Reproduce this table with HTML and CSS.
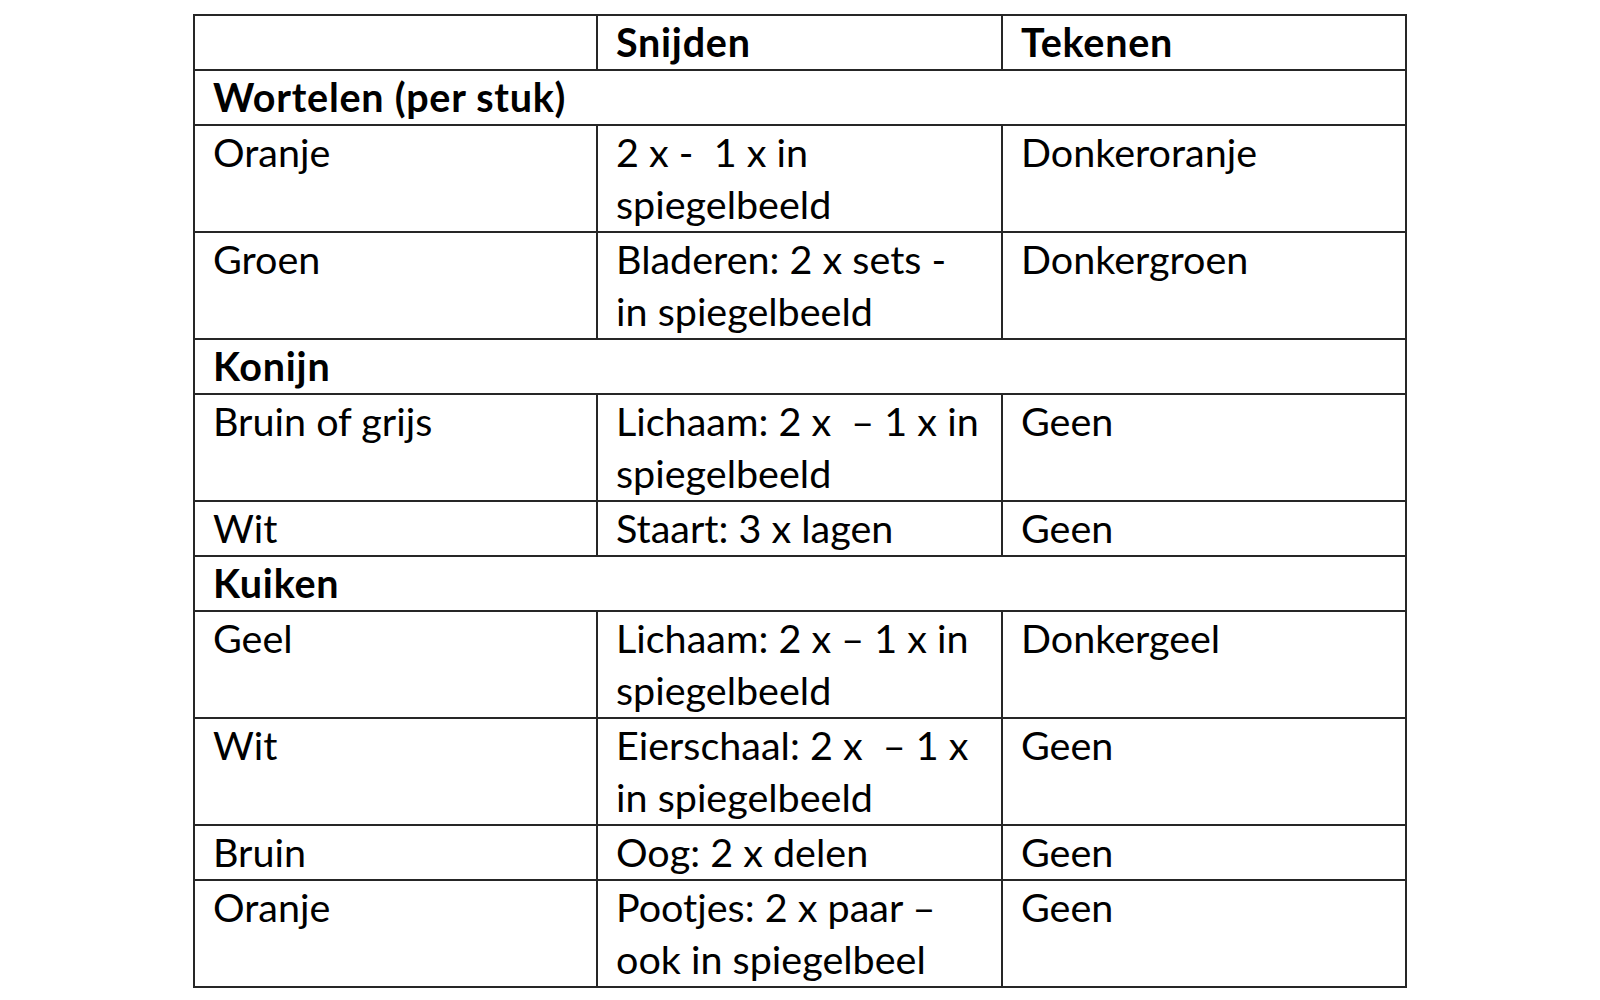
FILE: index.html
```html
<!DOCTYPE html>
<html lang="nl">
<head>
<meta charset="utf-8">
<title>Materialen</title>
<link rel="stylesheet" href="styles.css">
</head>
<body>
<table class="grid">
  <colgroup>
    <col class="c1"><col class="c2"><col class="c3">
  </colgroup>
  <tr class="head">
    <td></td>
    <td>Snijden</td>
    <td>Tekenen</td>
  </tr>
  <tr class="section"><td colspan="3">Wortelen (per stuk)</td></tr>
  <tr><td>Oranje</td><td>2 x -&nbsp; 1 x in<br>spiegelbeeld</td><td>Donkeroranje</td></tr>
  <tr><td>Groen</td><td>Bladeren: 2 x sets -<br>in spiegelbeeld</td><td>Donkergroen</td></tr>
  <tr class="section"><td colspan="3">Konijn</td></tr>
  <tr><td>Bruin of grijs</td><td>Lichaam: 2 x &nbsp;– 1 x in<br>spiegelbeeld</td><td>Geen</td></tr>
  <tr><td>Wit</td><td>Staart: 3 x lagen</td><td>Geen</td></tr>
  <tr class="section"><td colspan="3">Kuiken</td></tr>
  <tr><td>Geel</td><td>Lichaam: 2 x – 1 x in<br>spiegelbeeld</td><td>Donkergeel</td></tr>
  <tr><td>Wit</td><td>Eierschaal: 2 x &nbsp;– 1 x<br>in spiegelbeeld</td><td>Geen</td></tr>
  <tr><td>Bruin</td><td>Oog: 2 x delen</td><td>Geen</td></tr>
  <tr><td>Oranje</td><td>Pootjes: 2 x paar –<br>ook in spiegelbeel</td><td>Geen</td></tr>
</table>
</body>
</html>
```

FILE: styles.css
```css
html, body {
  margin: 0;
  padding: 0;
  background: #ffffff;
}

body {
  padding: 14px 0 0 193px;
  font-family: Lato, "Open Sans", "Liberation Sans", sans-serif;
  color: #000000;
}

.grid {
  border-collapse: collapse;
  table-layout: fixed;
  width: 1212px;
}

.c1 { width: 403px; }
.c2 { width: 405px; }
.c3 { width: 404px; }

.grid td {
  border: 2px solid #262626;
  vertical-align: top;
  padding: 0 10px 1px 18px;
  font-size: 39.5px;
  line-height: 52px;
  height: 53px;
  box-sizing: border-box;
  white-space: nowrap;
}

.head td,
.section td {
  font-weight: 700;
  letter-spacing: 0.75px;
}
```
